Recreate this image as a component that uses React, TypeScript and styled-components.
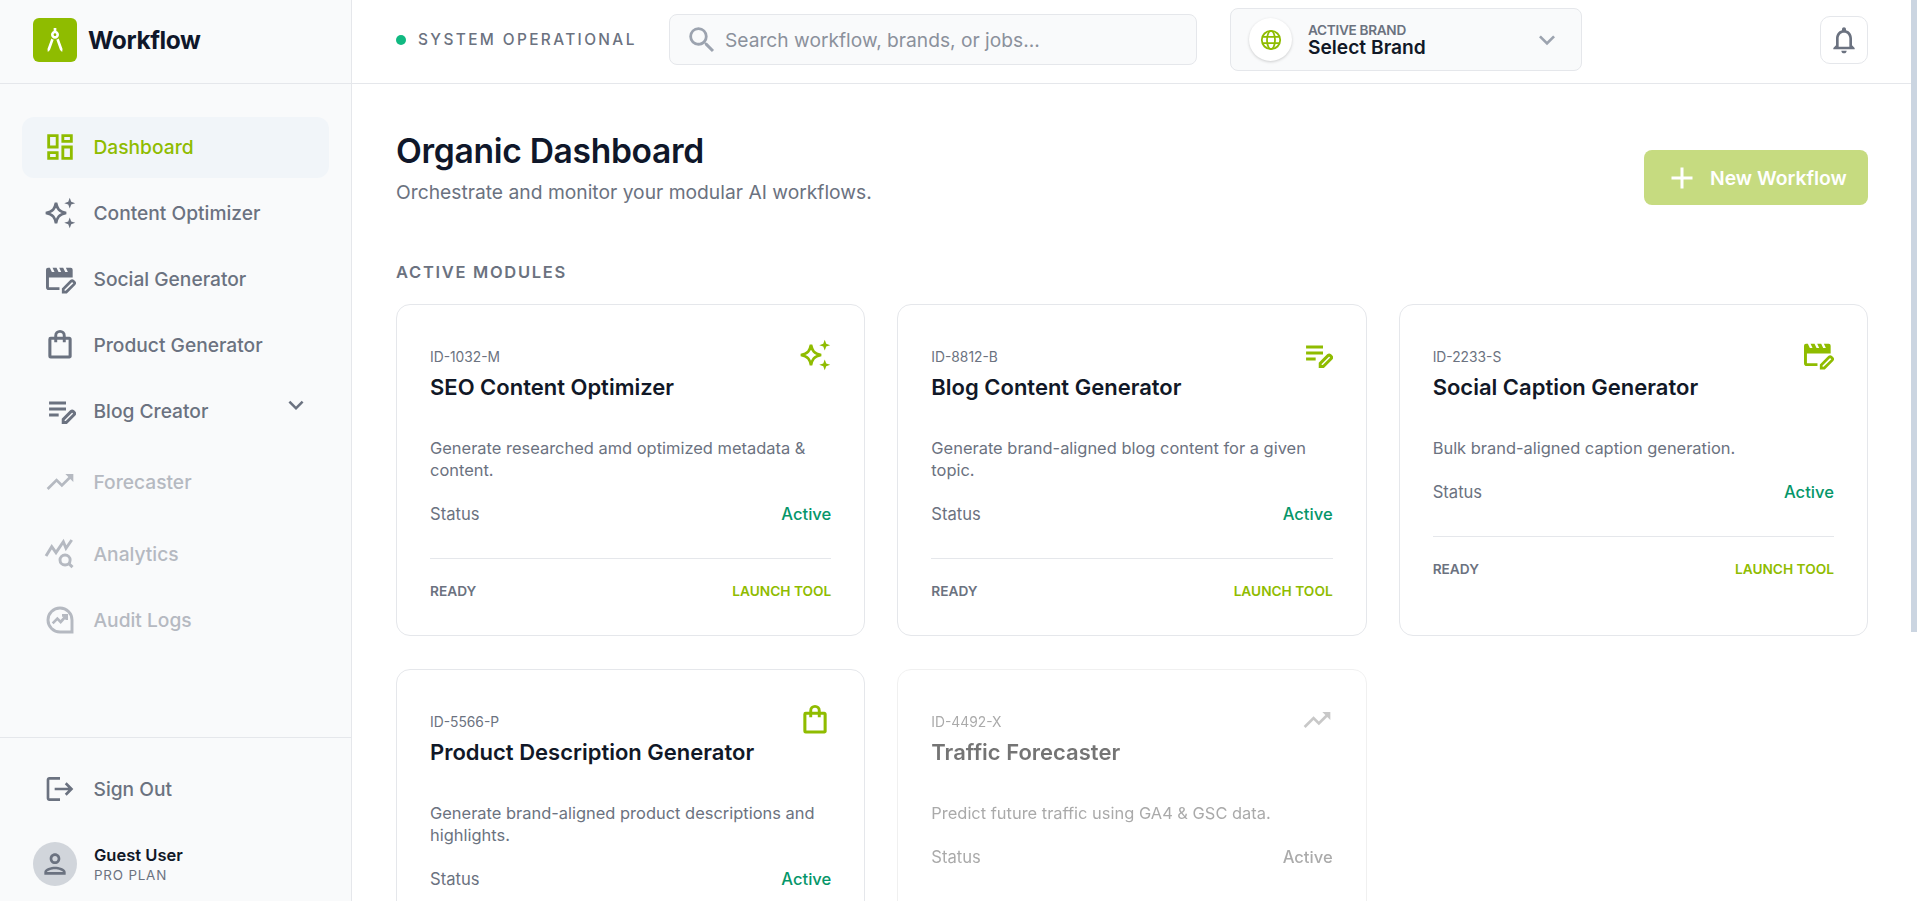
import { FC, ReactNode } from "react";
import styled, { createGlobalStyle } from "styled-components";
import {
  MdAdd,
  MdArchitecture,
  MdExpandMore,
  MdLogout,
  MdOutlineDashboard,
  MdOutlineNotifications,
  MdOutlinePerson,
  MdSearch,
  MdTrendingUp,
} from "react-icons/md";

const GREEN = "#8fbc00";

const GlobalStyle = createGlobalStyle`
  * { box-sizing: border-box; }
  body {
    margin: 0;
    background: #ffffff;
    color: #111827;
    font-family: Inter, "Liberation Sans", sans-serif;
  }
`;

const SIZE = 32;

const Sparkle: FC = () => (
  <svg width={SIZE} height={SIZE} viewBox="0 0 24 24" fill="none">
    <path
      d="M9 4.4C10 8.9 11.1 10.9 16.6 12 11.1 13.1 10 15.1 9 19.6 8 15.1 6.9 13.1 1.4 12 6.9 10.9 8 8.9 9 4.4z"
      stroke="currentColor"
      strokeWidth="2"
    />
    <path
      d="M19.3.5l1.1 3 3 1.1-3 1.1-1.1 3-1.1-3-3-1.1 3-1.1zM19.3 15.3l1.1 3 3 1.1-3 1.1-1.1 3-1.1-3-3-1.1 3-1.1z"
      fill="currentColor"
    />
  </svg>
);

const pencil = "M14.4 20.6v-2.3l6-6a1 1 0 0 1 1.4 0l.9.9a1 1 0 0 1 0 1.4l-6 6z";

const MovieEdit: FC = () => (
  <svg width={SIZE} height={SIZE} viewBox="0 0 24 24" fill="none">
    <path d="M2.6 9V18.2a1 1 0 0 0 1 1h8" stroke="currentColor" strokeWidth="2.2" />
    <path
      d="M1.5 5a1.5 1.5 0 0 1 1.5-1.5h1.4l1.5 3.2h2L6.4 3.5h3l1.5 3.2h2l-1.5-3.2h3l1.5 3.2h2l-1.5-3.2H20a1.5 1.5 0 0 1 1.5 1.5v5.8h-20z"
      fill="currentColor"
    />
    <path d={pencil} stroke="currentColor" strokeWidth="2" transform="translate(0 1.2)" />
  </svg>
);

const EditNote: FC = () => (
  <svg width={SIZE} height={SIZE} viewBox="0 0 24 24" fill="none">
    <path d="M3.8 6h12.7M3.8 10.5h12.7M3.8 15H11" stroke="currentColor" strokeWidth="2.3" />
    <path d={pencil} stroke="currentColor" strokeWidth="2.2" />
  </svg>
);

const Bag: FC = () => (
  <svg width={SIZE} height={SIZE} viewBox="0 0 24 24" fill="none">
    <path
      d="M5 7h14a.6.6 0 0 1 .6.6V20.4a.6.6 0 0 1-.6.6H5a.6.6 0 0 1-.6-.6V7.6A.6.6 0 0 1 5 7z"
      stroke="currentColor"
      strokeWidth="2.3"
    />
    <path d="M8.8 10V5a3.2 3.2 0 0 1 6.4 0v5" stroke="currentColor" strokeWidth="2.2" />
  </svg>
);

const QueryStats: FC = () => (
  <svg width={SIZE} height={SIZE} viewBox="0 0 24 24" fill="none">
    <path
      d="M1.5 13.5L5.8 6.5 9 11 14.5 2.8l2 4.9 4.3-6.2"
      stroke="currentColor"
      strokeWidth="2.2"
    />
    <circle cx="15.8" cy="16.5" r="3.8" stroke="currentColor" strokeWidth="2.2" />
    <path d="M18.6 19.2l2.8 2.6" stroke="currentColor" strokeWidth="2.2" />
  </svg>
);

const AuditChart: FC = () => (
  <svg width={SIZE} height={SIZE} viewBox="0 0 24 24" fill="none">
    <path d="M12 3a9 9 0 1 0 0 18h9v-9a9 9 0 0 0-9-9z" stroke="currentColor" strokeWidth="2.2" />
    <path
      d="M6.5 14.5l3.5-3.5 2.5 2.5 4-4.5M13.5 8.5h3.5V12"
      stroke="currentColor"
      strokeWidth="2"
    />
  </svg>
);

const Globe: FC = () => (
  <svg width="24" height="24" viewBox="0 0 24 24" fill="none" stroke="currentColor" strokeWidth="1.8">
    <circle cx="12" cy="12" r="9.2" />
    <ellipse cx="12" cy="12" rx="4" ry="9.2" />
    <path d="M3.4 8.8h17.2M3.4 15.2h17.2" />
  </svg>
);

const Page = styled.div`
  display: flex;
  height: 100vh;
  overflow: hidden;
`;

const Sidebar = styled.aside`
  flex: 0 0 352px;
  display: flex;
  flex-direction: column;
  background: #f9fafb;
  border-right: 1px solid #e5e7eb;
`;

const BrandRow = styled.div`
  flex: 0 0 84px;
  display: flex;
  align-items: center;
  gap: 11px;
  padding: 0 33px 3px;
  border-bottom: 1px solid #e5e7eb;
`;

const LogoMark = styled.div`
  width: 44px;
  height: 44px;
  border-radius: 6px;
  background: ${GREEN};
  color: #ffffff;
  display: flex;
  align-items: center;
  justify-content: center;
`;

const LogoText = styled.div`
  font-size: 24.5px;
  font-weight: 700;
  letter-spacing: -0.4px;
  color: #0f172a;
`;

const Nav = styled.nav`
  flex: 1;
  padding: 33px 22px 0;
`;

const NavItem = styled.div<{ $active?: boolean; $disabled?: boolean; $top?: number }>`
  height: 61px;
  margin-top: ${(p) => p.$top ?? 5}px;
  padding: 0 18px 2px 22px;
  display: flex;
  align-items: center;
  gap: 17.5px;
  border-radius: 12px;
  font-size: 19.2px;
  font-weight: 500;
  background: ${(p) => (p.$active ? "#f1f5f9" : "transparent")};
  color: ${(p) => (p.$active ? GREEN : p.$disabled ? "#b5b9c1" : "#6b7280")};
  svg {
    flex: none;
  }
  &:first-child {
    margin-top: 0;
  }
`;

const DashboardIcon = styled(MdOutlineDashboard)`
  margin: 0 -1px;
`;

const Caret = styled.span`
  margin: 0 0 12px auto;
  display: flex;
  color: #6b7280;
`;

const SidebarFoot = styled.div`
  flex: 0 0 164px;
  padding: 21px 22px 0;
  border-top: 1px solid #e5e7eb;
`;

const UserRow = styled.div`
  margin-top: 22px;
  padding-left: 11px;
  display: flex;
  align-items: center;
  gap: 17px;
`;

const Avatar = styled.div`
  width: 44px;
  height: 44px;
  border-radius: 50%;
  background: #d1d5db;
  color: #6b7280;
  display: flex;
  align-items: center;
  justify-content: center;
`;

const UserName = styled.div`
  font-size: 16.5px;
  font-weight: 600;
  line-height: 20px;
  color: #111827;
`;

const UserPlan = styled.div`
  margin-top: 2px;
  font-size: 13.4px;
  line-height: 16px;
  letter-spacing: 0.8px;
  color: #6b7280;
`;

const Column = styled.div`
  flex: 1;
  min-width: 0;
  overflow-y: auto;
  scrollbar-width: none;
`;

const ScrollRail = styled.div`
  flex: 0 0 6px;
  background: #ffffff;
`;

const ScrollThumb = styled.div`
  height: 632px;
  background: #cbd5e1;
`;

const TopBar = styled.header`
  position: sticky;
  top: 0;
  z-index: 2;
  height: 84px;
  padding: 0 43px 4px 44px;
  display: flex;
  align-items: center;
  background: #ffffff;
  border-bottom: 1px solid #e5e7eb;
`;

const StatusDot = styled.span`
  flex: none;
  width: 10px;
  height: 10px;
  border-radius: 50%;
  background: #10b981;
`;

const StatusText = styled.span`
  margin-left: 12px;
  flex: 0 0 217px;
  min-width: 0;
  font-size: 15.4px;
  font-weight: 500;
  letter-spacing: 2.38px;
  white-space: nowrap;
  color: #6b7280;
`;

const SearchBox = styled.div`
  margin-left: 34px;
  flex: 0 0 528px;
  height: 51px;
  padding: 0 15px;
  display: flex;
  align-items: center;
  gap: 6px;
  background: #f9fafb;
  border: 1px solid #e5e7eb;
  border-radius: 8px;
  font-size: 19.2px;
  color: #8b919c;
`;

const SearchIcon = styled(MdSearch)`
  color: #9ca3af;
`;

const BrandPicker = styled.div`
  margin-left: 33px;
  flex: 0 0 352px;
  height: 63px;
  padding: 0 18px 0 18px;
  display: flex;
  align-items: center;
  background: #f9fafb;
  border: 1px solid #e5e7eb;
  border-radius: 8px;
`;

const GlobeBubble = styled.div`
  width: 43px;
  height: 43px;
  border-radius: 50%;
  background: #ffffff;
  box-shadow: 0 1px 3px rgba(0, 0, 0, 0.18);
  color: ${GREEN};
  display: flex;
  align-items: center;
  justify-content: center;
`;

const PickerText = styled.div`
  margin-left: 16px;
  flex: 1;
`;

const PickerLabel = styled.div`
  font-size: 13.6px;
  font-weight: 600;
  line-height: 14px;
  letter-spacing: -0.3px;
  color: #6b7280;
`;

const PickerValue = styled.div`
  font-size: 19.2px;
  font-weight: 600;
  line-height: 20px;
  color: #111827;
`;

const PickerCaret = styled(MdExpandMore)`
  color: #9ca3af;
`;

const BellButton = styled.div`
  margin-left: auto;
  width: 48px;
  height: 48px;
  border: 1px solid #e5e7eb;
  border-radius: 10px;
  color: #6b7280;
  display: flex;
  align-items: center;
  justify-content: center;
`;

const Main = styled.main`
  padding: 45px 43px 0 44px;
  min-height: 1201px;
`;

const TitleRow = styled.div`
  display: flex;
  align-items: flex-start;
  justify-content: space-between;
`;

const Title = styled.h1`
  margin: 0;
  font-size: 33.6px;
  line-height: 44px;
  font-weight: 600;
  letter-spacing: -0.3px;
  color: #0f172a;
`;

const Subtitle = styled.p`
  margin: 7px 0 0;
  font-size: 19.25px;
  line-height: 24px;
  color: #6b7280;
`;

const NewButton = styled.div`
  margin-top: 21px;
  flex: 0 0 224px;
  height: 55px;
  padding-left: 20px;
  display: flex;
  align-items: center;
  gap: 10px;
  border-radius: 8px;
  background: #c6db80;
  color: #ffffff;
  font-size: 19.35px;
  font-weight: 600;
`;

const SectionLabel = styled.h2`
  margin: 56px 0 0;
  font-size: 16.5px;
  line-height: 22px;
  font-weight: 600;
  letter-spacing: 1.7px;
  color: #6b7280;
`;

const CardGrid = styled.div`
  margin-top: 21px;
  display: grid;
  grid-template-columns: repeat(3, 1fr);
  gap: 33px 32px;
`;

const CardBox = styled.div<{ $muted?: boolean }>`
  padding: 34px 33px 35px;
  border: 1px solid #e5e7eb;
  border-radius: 14px;
  background: #ffffff;
  opacity: ${(p) => (p.$muted ? 0.6 : 1)};
  filter: ${(p) => (p.$muted ? "grayscale(1)" : "none")};
`;

const CardHead = styled.div`
  position: relative;
  height: 78px;
`;

const CardIcon = styled.div`
  position: absolute;
  top: 0;
  right: 0;
  color: ${GREEN};
  display: flex;
`;

const CardId = styled.div`
  padding-top: 9px;
  font-size: 13.8px;
  line-height: 18px;
  color: #6b7280;
`;

const CardTitle = styled.div`
  margin-top: 6px;
  font-size: 22px;
  line-height: 30px;
  font-weight: 600;
  color: #111827;
`;

const CardText = styled.p`
  margin: 20px 0 0;
  font-size: 16.45px;
  line-height: 22px;
  color: #6b7280;
`;

const StatusRow = styled.div`
  margin-top: 22px;
  display: flex;
  justify-content: space-between;
  font-size: 16.6px;
  line-height: 22px;
  font-weight: 400;
  color: #6b7280;
`;

const ActiveLabel = styled.span`
  font-weight: 500;
  color: #059669;
`;

const CardFoot = styled.div`
  margin-top: 33px;
  padding-top: 23px;
  border-top: 1px solid #e5e7eb;
  display: flex;
  justify-content: space-between;
  font-size: 13.7px;
  line-height: 18px;
  font-weight: 600;
  color: #6b7280;
`;

const LaunchLink = styled.span`
  color: ${GREEN};
`;

type Module = {
  id: string;
  title: string;
  text: string;
  icon: ReactNode;
  muted?: boolean;
};

const modules: Module[] = [
  {
    id: "ID-1032-M",
    title: "SEO Content Optimizer",
    text: "Generate researched amd optimized metadata & content.",
    icon: <Sparkle />,
  },
  {
    id: "ID-8812-B",
    title: "Blog Content Generator",
    text: "Generate brand-aligned blog content for a given topic.",
    icon: <EditNote />,
  },
  {
    id: "ID-2233-S",
    title: "Social Caption Generator",
    text: "Bulk brand-aligned caption generation.",
    icon: <MovieEdit />,
  },
  {
    id: "ID-5566-P",
    title: "Product Description Generator",
    text: "Generate brand-aligned product descriptions and highlights.",
    icon: <Bag />,
  },
  {
    id: "ID-4492-X",
    title: "Traffic Forecaster",
    text: "Predict future traffic using GA4 & GSC data.",
    icon: <MdTrendingUp size={SIZE} />,
    muted: true,
  },
];

const ModuleCard: FC<{ module: Module }> = ({ module }) => (
  <CardBox $muted={module.muted}>
    <CardHead>
      <CardIcon>{module.icon}</CardIcon>
      <CardId>{module.id}</CardId>
      <CardTitle>{module.title}</CardTitle>
    </CardHead>
    <CardText>{module.text}</CardText>
    <StatusRow>
      Status
      <ActiveLabel>Active</ActiveLabel>
    </StatusRow>
    <CardFoot>
      READY
      <LaunchLink>LAUNCH TOOL</LaunchLink>
    </CardFoot>
  </CardBox>
);

export default function App() {
  return (
    <Page>
      <GlobalStyle />
      <Sidebar>
        <BrandRow>
          <LogoMark>
            <MdArchitecture size={32} />
          </LogoMark>
          <LogoText>Workflow</LogoText>
        </BrandRow>
        <Nav>
          <NavItem $active>
            <DashboardIcon size={34} />
            Dashboard
          </NavItem>
          <NavItem>
            <Sparkle />
            Content Optimizer
          </NavItem>
          <NavItem>
            <MovieEdit />
            Social Generator
          </NavItem>
          <NavItem>
            <Bag />
            Product Generator
          </NavItem>
          <NavItem>
            <EditNote />
            Blog Creator
            <Caret>
              <MdExpandMore size={30} />
            </Caret>
          </NavItem>
          <NavItem $disabled $top={10}>
            <MdTrendingUp size={SIZE} />
            Forecaster
          </NavItem>
          <NavItem $disabled $top={11}>
            <QueryStats />
            Analytics
          </NavItem>
          <NavItem $disabled>
            <AuditChart />
            Audit Logs
          </NavItem>
        </Nav>
        <SidebarFoot>
          <NavItem>
            <MdLogout size={SIZE} />
            Sign Out
          </NavItem>
          <UserRow>
            <Avatar>
              <MdOutlinePerson size={32} />
            </Avatar>
            <div>
              <UserName>Guest User</UserName>
              <UserPlan>PRO PLAN</UserPlan>
            </div>
          </UserRow>
        </SidebarFoot>
      </Sidebar>
      <Column>
        <TopBar>
          <StatusDot />
          <StatusText>SYSTEM OPERATIONAL</StatusText>
          <SearchBox>
            <SearchIcon size={34} />
            Search workflow, brands, or jobs...
          </SearchBox>
          <BrandPicker>
            <GlobeBubble>
              <Globe />
            </GlobeBubble>
            <PickerText>
              <PickerLabel>ACTIVE BRAND</PickerLabel>
              <PickerValue>Select Brand</PickerValue>
            </PickerText>
            <PickerCaret size={32} />
          </BrandPicker>
          <BellButton>
            <MdOutlineNotifications size={32} />
          </BellButton>
        </TopBar>
        <Main>
          <TitleRow>
            <div>
              <Title>Organic Dashboard</Title>
              <Subtitle>Orchestrate and monitor your modular AI workflows.</Subtitle>
            </div>
            <NewButton>
              <MdAdd size={36} />
              New Workflow
            </NewButton>
          </TitleRow>
          <SectionLabel>ACTIVE MODULES</SectionLabel>
          <CardGrid>
            {modules.map((m) => (
              <ModuleCard key={m.id} module={m} />
            ))}
          </CardGrid>
        </Main>
      </Column>
      <ScrollRail>
        <ScrollThumb />
      </ScrollRail>
    </Page>
  );
}
